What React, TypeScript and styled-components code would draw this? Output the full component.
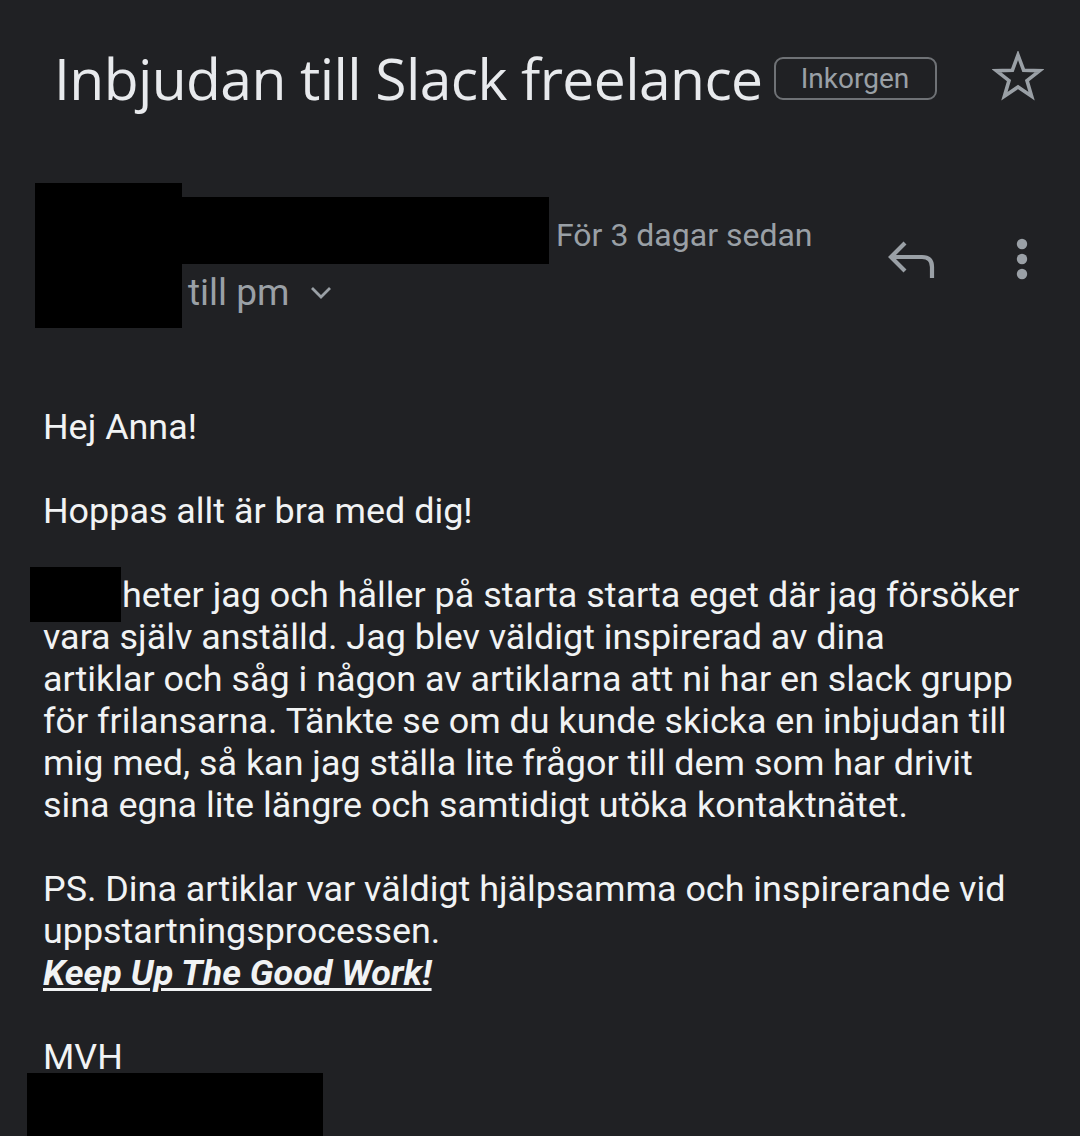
import React from "react";
import styled, { createGlobalStyle } from "styled-components";

const Global = createGlobalStyle`
  html, body { margin: 0; padding: 0; background: #202124; }
  body { font-family: Roboto, "Noto Sans", sans-serif; }
`;

const Page = styled.div`
  width: 1080px;
  height: 1136px;
  overflow: hidden;
  background: #202124;
  color: #e8eaed;
`;

const TitleRow = styled.div`
  display: flex;
  align-items: center;
  padding: 44px 36px 0 54px;
  height: 68px;
`;

const Title = styled.h1`
  margin: 0;
  font-family: "Open Sans", Roboto, sans-serif;
  font-weight: 400;
  font-size: 57px;
  letter-spacing: -0.6px;
  color: #e8eaed;
  white-space: nowrap;
`;

const Chip = styled.span`
  margin-left: 11px;
  border: 2px solid #6f7276;
  border-radius: 9px;
  height: 43px;
  display: flex;
  align-items: center;
  font-family: Roboto, sans-serif;
  font-size: 28px;
  color: #9aa0a6;
  box-sizing: border-box;
  width: 163px;
  justify-content: center;
`;

const StarBtn = styled.span`
  margin-left: auto;
  display: flex;
  margin-top: -4px;
`;

const SenderRow = styled.div`
  display: flex;
  padding: 71px 0 0 35px;
  height: 145px;
`;

const Avatar = styled.div`
  width: 147px;
  height: 145px;
  background: #000;
  flex-shrink: 0;
`;

const SenderInfo = styled.div`
  display: flex;
  flex-direction: column;
`;

const NameLine = styled.div`
  display: flex;
  align-items: center;
  margin-top: 14px;
`;

const Redacted = styled.div<{ w: number; h: number }>`
  width: ${(p) => p.w}px;
  height: ${(p) => p.h}px;
  background: #000;
  flex-shrink: 0;
`;

const Time = styled.span`
  margin-left: 7px;
  font-size: 32px;
  color: #9aa0a6;
  margin-top: 8px;
  white-space: nowrap;
`;

const ToLine = styled.div`
  display: flex;
  align-items: center;
  margin-left: 6px;
  margin-top: 7px;
  font-size: 37px;
  color: #9aa0a6;
  gap: 20px;
`;

const Actions = styled.div`
  margin-left: auto;
  display: flex;
  align-items: flex-start;
  padding-top: 55px;
  padding-right: 52px;
  gap: 80px;
`;

const Body = styled.div`
  padding: 78px 20px 0 43px;
  font-size: 35.9px;
  line-height: 42px;
  color: #f1f3f4;
`;

const Para = styled.p`
  margin: 0 0 42px 0;
`;

const InlineRedact = styled.span`
  display: inline-block;
  width: 91px;
  height: 55px;
  background: #000;
  margin: -20px 1px -15px -13px;
  vertical-align: baseline;
`;

const Emph = styled.span`
  font-weight: 700;
  font-style: italic;
  text-decoration: underline;
  text-decoration-thickness: 3px;
  text-underline-offset: 3px;
`;

const Signature = styled.div`
  width: 296px;
  height: 80px;
  background: #000;
  margin-left: -16px;
  margin-top: -5px;
`;

export default function App() {
  return (
    <Page>
      <Global />
      <TitleRow>
        <Title>Inbjudan till Slack freelance</Title>
        <Chip>Inkorgen</Chip>
        <StarBtn>
          <svg width="52" height="50" viewBox="0 0 52 50">
            <path
              d="M26 4 L31.6 19.2 L47.8 19.6 L35 29.6 L39.6 45.2 L26 36 L12.4 45.2 L17 29.6 L4.2 19.6 L20.4 19.2 Z"
              fill="none"
              stroke="#9aa0a6"
              strokeWidth="3.6"
              strokeLinejoin="miter"
            />
          </svg>
        </StarBtn>
      </TitleRow>
      <SenderRow>
        <Avatar />
        <SenderInfo>
          <NameLine>
            <Redacted w={367} h={67} />
            <Time>För 3 dagar sedan</Time>
          </NameLine>
          <ToLine>
            <span>till pm</span>
            <svg width="22" height="14" viewBox="0 0 22 14">
              <path d="M2 2 L11 11 L20 2" fill="none" stroke="#9aa0a6" strokeWidth="2.8" />
            </svg>
          </ToLine>
        </SenderInfo>
        <Actions>
          <svg width="50" height="42" viewBox="0 0 50 42">
            <path
              d="M19 5 L5 19 L19 33 M5 19 H36 Q46 19 46 29 V40"
              fill="none"
              stroke="#9aa0a6"
              strokeWidth="4.2"
            />
          </svg>
          <svg width="12" height="42" viewBox="0 0 12 42">
            <circle cx="6" cy="6" r="5.2" fill="#9aa0a6" />
            <circle cx="6" cy="21" r="5.2" fill="#9aa0a6" />
            <circle cx="6" cy="36" r="5.2" fill="#9aa0a6" />
          </svg>
        </Actions>
      </SenderRow>
      <Body>
        <Para>Hej Anna!</Para>
        <Para>Hoppas allt är bra med dig!</Para>
        <Para>
          <InlineRedact />
          heter jag och håller på starta starta eget där jag försöker
          <br />
          vara själv anställd. Jag blev väldigt inspirerad av dina
          <br />
          artiklar och såg i någon av artiklarna att ni har en slack grupp
          <br />
          för frilansarna. Tänkte se om du kunde skicka en inbjudan till
          <br />
          mig med, så kan jag ställa lite frågor till dem som har drivit
          <br />
          sina egna lite längre och samtidigt utöka kontaktnätet.
        </Para>
        <Para>
          PS. Dina artiklar var väldigt hjälpsamma och inspirerande vid
          <br />
          uppstartningsprocessen.
          <br />
          <Emph>Keep Up The Good Work!</Emph>
        </Para>
        <div>MVH</div>
        <Signature />
      </Body>
    </Page>
  );
}
